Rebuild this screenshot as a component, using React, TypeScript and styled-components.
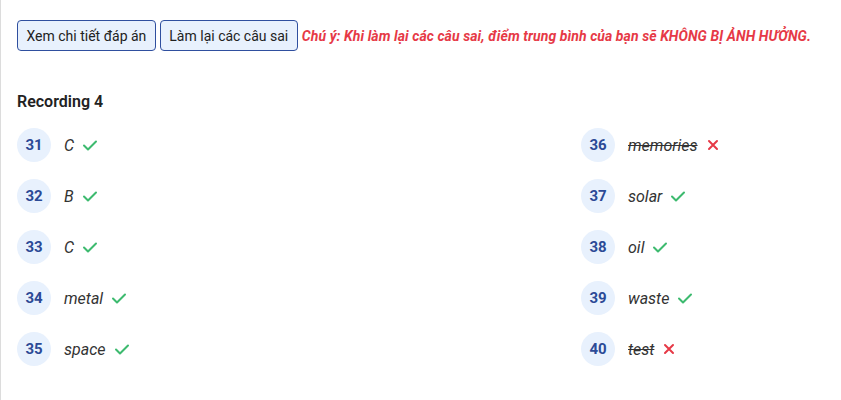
import React from "react";
import styled, { createGlobalStyle } from "styled-components";

const Global = createGlobalStyle`
  html, body { margin: 0; padding: 0; background: #fff; }
  body { font-family: Roboto, "Noto Sans", Arial, sans-serif; }
`;

const Page = styled.div`
  border-left: 1px solid #dcdcdc;
  min-height: 400px;
  box-sizing: border-box;
  padding: 20px 16px 0 16px;
`;

const Toolbar = styled.div`
  display: flex;
  align-items: center;
  gap: 4px;
`;

const Button = styled.button`
  font-family: Roboto, Arial, sans-serif;
  font-size: 14px;
  color: #222;
  background: #e8f1fd;
  border: 1px solid #2f4f9f;
  border-radius: 4px;
  height: 31px;
  padding: 0 8.5px;
  cursor: pointer;
`;

const Note = styled.span`
  font-family: Roboto, Arial, sans-serif;
  font-size: 14px;
  font-weight: 700;
  font-style: italic;
  letter-spacing: 0.08px;
  color: #e63946;
`;

const Heading = styled.h3`
  font-family: Roboto, Arial, sans-serif;
  font-size: 16px;
  font-weight: 600;
  color: #222;
  margin: 41px 0 0 0;
  line-height: 20px;
`;

const Grid = styled.div`
  display: grid;
  grid-template-columns: 564px 1fr;
  margin-top: 16px;
`;

const Column = styled.div`
  display: flex;
  flex-direction: column;
  gap: 17px;
`;

const Row = styled.div`
  display: flex;
  align-items: center;
  height: 34px;
`;

const Badge = styled.div`
  width: 34px;
  height: 34px;
  border-radius: 50%;
  background: #e8f1fd;
  color: #2c4a96;
  font-weight: 700;
  font-size: 15px;
  display: flex;
  align-items: center;
  justify-content: center;
  flex-shrink: 0;
`;

const Answer = styled.span<{ $wrong?: boolean }>`
  margin-left: 13px;
  font-style: italic;
  font-size: 16px;
  color: #333;
  text-decoration: ${(p) => (p.$wrong ? "line-through" : "none")};
`;

const IconWrap = styled.span`
  display: inline-flex;
  margin-left: 8px;
`;

const Check = () => (
  <svg width="16" height="16" viewBox="0 0 16 16" fill="none">
    <path d="M2 8.5 L6 12.5 L14 4.5" stroke="#3dba6f" strokeWidth="2" strokeLinecap="round" strokeLinejoin="round" />
  </svg>
);

const Cross = () => (
  <svg width="14" height="14" viewBox="0 0 14 14" fill="none">
    <path d="M3 3 L11 11 M11 3 L3 11" stroke="#e63946" strokeWidth="2" strokeLinecap="round" />
  </svg>
);

type Item = { n: number; a: string; ok: boolean };

const left: Item[] = [
  { n: 31, a: "C", ok: true },
  { n: 32, a: "B", ok: true },
  { n: 33, a: "C", ok: true },
  { n: 34, a: "metal", ok: true },
  { n: 35, a: "space", ok: true },
];
const right: Item[] = [
  { n: 36, a: "memories", ok: false },
  { n: 37, a: "solar", ok: true },
  { n: 38, a: "oil", ok: true },
  { n: 39, a: "waste", ok: true },
  { n: 40, a: "test", ok: false },
];

const AnswerRow = ({ item }: { item: Item }) => (
  <Row>
    <Badge>{item.n}</Badge>
    <Answer $wrong={!item.ok}>{item.a}</Answer>
    <IconWrap>{item.ok ? <Check /> : <Cross />}</IconWrap>
  </Row>
);

export default function App() {
  return (
    <>
      <Global />
      <Page>
        <Toolbar>
          <Button>Xem chi tiết đáp án</Button>
          <Button>Làm lại các câu sai</Button>
          <Note>Chú ý: Khi làm lại các câu sai, điểm trung bình của bạn sẽ KHÔNG BỊ ẢNH HƯỞNG.</Note>
        </Toolbar>
        <Heading>Recording 4</Heading>
        <Grid>
          <Column>
            {left.map((it) => (
              <AnswerRow key={it.n} item={it} />
            ))}
          </Column>
          <Column>
            {right.map((it) => (
              <AnswerRow key={it.n} item={it} />
            ))}
          </Column>
        </Grid>
      </Page>
    </>
  );
}
